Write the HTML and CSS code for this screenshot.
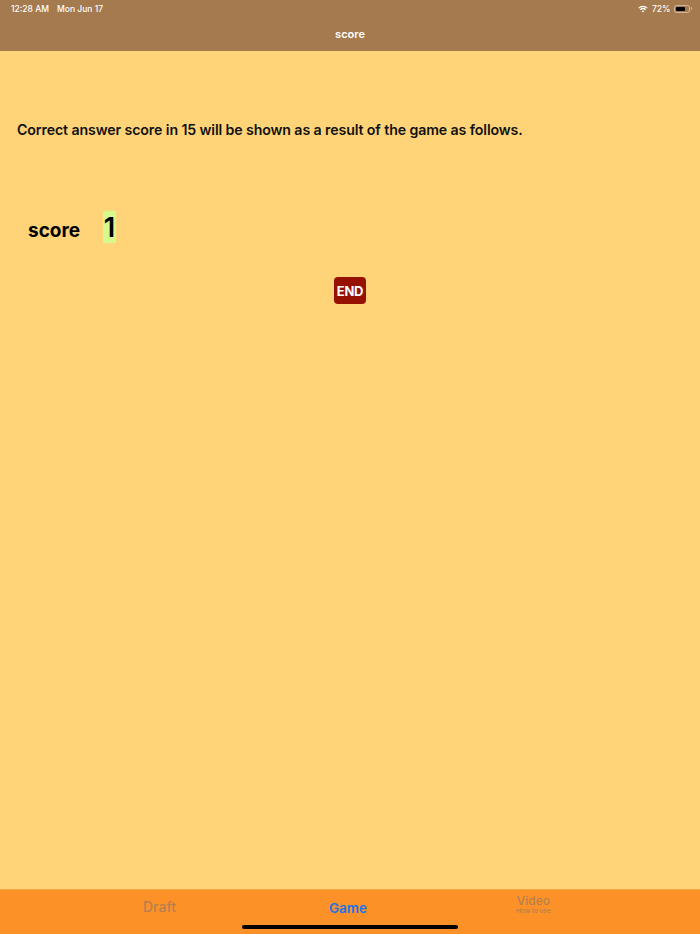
FILE: index.html
```html
<!DOCTYPE html>
<html>
<head>
<meta charset="utf-8">
<link rel="stylesheet" href="styles.css">
</head>
<body>
<div class="app">
  <header class="header">
    <div class="status">
      <div class="status-left"><span>12:28 AM</span><span class="date">Mon Jun 17</span></div>
      <div class="status-right">
        <svg class="wifi" width="10" height="8" viewBox="0 0 10 8"><path d="M5 7.6 L3.6 6.1 A2 2 0 0 1 6.4 6.1 Z" fill="#fff"/><path d="M2.3 4.8 A3.9 3.9 0 0 1 7.7 4.8" stroke="#fff" stroke-width="1.2" fill="none"/><path d="M0.8 3.1 A6 6 0 0 1 9.2 3.1" stroke="#fff" stroke-width="1.2" fill="none"/></svg>
        <span class="pct">72%</span>
        <span class="battery"><span class="battery-fill"></span></span><span class="battery-cap"></span>
      </div>
    </div>
    <div class="title">score</div>
  </header>
  <main class="content">
    <p class="intro">Correct answer score in 15 will be shown as a result of the game as follows.</p>
    <div class="score-row">
      <span class="score-label">score</span>
      <span class="score-value">1</span>
    </div>
    <div class="end-wrap"><button class="end-btn">END</button></div>
  </main>
  <nav class="tabbar">
    <div class="tab tab-draft">Draft</div>
    <div class="tab tab-game">Game</div>
    <div class="tab tab-video"><span class="video-main">Video</span><span class="video-sub">How to use</span></div>
    <div class="home-indicator"></div>
  </nav>
</div>
</body>
</html>
```

FILE: styles.css
```css
* { box-sizing: border-box; }
html, body { margin: 0; padding: 0; }
body {
  width: 700px;
  height: 934px;
  overflow: hidden;
  font-family: "Inter", "Liberation Sans", sans-serif;
  background: #FFD478;
}
.app {
  display: flex;
  flex-direction: column;
  height: 934px;
}
.header {
  background: #A47A4E;
  height: 51px;
  color: #fff;
  display: flex;
  flex-direction: column;
}
.status {
  display: flex;
  justify-content: space-between;
  align-items: center;
  height: 17px;
  padding: 0 8px 0 11px;
  font-size: 8.5px;
  font-weight: 500;
}
.status-left .date { margin-left: 8px; }
.status-right {
  display: flex;
  align-items: center;
  gap: 3px;
}
.wifi { margin-right: 1px; }
.battery {
  width: 16px;
  height: 8px;
  border: 1px solid rgba(255,255,255,0.45);
  border-radius: 2.5px;
  padding: 1px;
  display: flex;
}
.battery-fill {
  width: 80%;
  background: #000;
  border-radius: 1px;
}
.battery-cap {
  width: 1.5px;
  height: 3px;
  background: rgba(255,255,255,0.45);
  margin-left: -2px;
  border-radius: 0 1px 1px 0;
}
.title {
  flex: 1;
  display: flex;
  align-items: center;
  justify-content: center;
  font-size: 11px;
  font-weight: 600;
  padding-bottom: 1px;
}
.content {
  flex: 1;
  position: relative;
}
.intro {
  margin: 0;
  padding: 70px 0 0 17px;
  font-size: 14.2px;
  font-weight: 600;
  color: #111;
  line-height: 18px;
  letter-spacing: -0.12px;
}
.score-row {
  display: flex;
  align-items: center;
  margin-top: 72px;
  padding-left: 28px;
}
.score-label {
  font-size: 19px;
  font-weight: 700;
  color: #000;
  width: 75px;
  padding-top: 6px;
}
.score-value {
  background: #D5F98C;
  width: 13px;
  height: 32px;
  font-size: 27px;
  font-weight: 600;
  color: #000;
  display: flex;
  align-items: center;
  justify-content: center;
}
.end-wrap {
  display: flex;
  justify-content: center;
  margin-top: 34px;
}
.end-btn {
  background: #961102;
  color: #fff;
  border: none;
  border-radius: 4px;
  width: 32px;
  height: 27px;
  padding: 0;
  font-family: "Inter", "Liberation Sans", sans-serif;
  font-size: 13px;
  font-weight: 700;
  letter-spacing: -0.3px;
}
.tabbar {
  height: 45px;
  background: #FC9227;
  position: relative;
  display: flex;
  border-top: 1px solid #F4A54A;
}
.tab {
  position: absolute;
  font-size: 13px;
  font-weight: 600;
}
.tab-draft { left: 143px; top: 8px; font-size: 14px; font-weight: 500; color: rgba(120,110,110,0.55); }
.tab-game { left: 329px; top: 10px; color: #1B73E8; font-size: 13.5px; }
.tab-video {
  left: 516px; top: 5px;
  display: flex;
  flex-direction: column;
  align-items: center;
  color: rgba(120,110,110,0.55);
}
.video-main { font-size: 12px; line-height: 12px; font-weight: 500; }
.video-sub { font-size: 6.5px; line-height: 8px; font-weight: 500; }
.home-indicator {
  position: absolute;
  left: 242px;
  top: 35px;
  width: 216px;
  height: 4px;
  background: #000;
  border-radius: 2px;
}
```
